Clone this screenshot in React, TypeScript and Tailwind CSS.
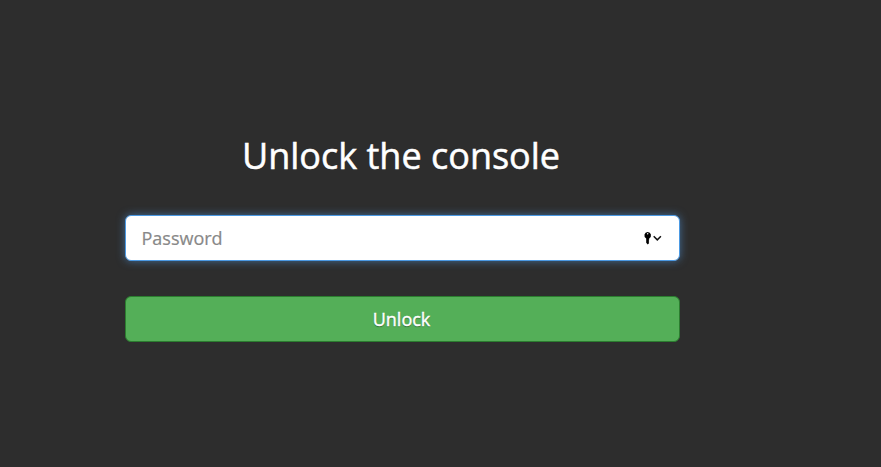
export default function App() {
  return (
    <main className="flex h-screen w-full flex-col overflow-hidden bg-[#2d2d2d] pl-[125px] pt-[131px] font-['Open_Sans','Noto_Sans',sans-serif]">
      <form className="flex w-[555px] flex-col" onSubmit={(e) => e.preventDefault()}>
        <h1 className="pr-[3px] text-center text-[36px] leading-[50px] text-white [-webkit-text-stroke:0.5px_white]">Unlock the console</h1>
        <div className="mt-[34px] flex h-[46px] items-center justify-between rounded-[6px] border border-[#4b99e3] bg-white pl-[15.5px] pr-[17px] shadow-[0_0_8px_rgba(82,150,220,0.6)]">
          <input type="password" placeholder="Password" aria-label="Password" className="min-w-0 flex-1 bg-transparent text-[18px] text-[#555] outline-none placeholder:text-[#888] placeholder:[-webkit-text-stroke:0.2px_#888]" />
          <svg width="19" height="14" viewBox="0 0 19 14" fill="none">
            <path fillRule="evenodd" d="M4.7 1a3.4 3.4 0 0 0-1.5 6.4v4.3l1.5 1.8L6.2 12l-.6-1 .6-1-.6-1 .6-.6v-1A3.4 3.4 0 0 0 4.7 1Zm0 1a.7.7 0 1 1 0 1.4.7.7 0 0 1 0-1.4Z" fill="#000" />
            <path d="m10.7 5.3 3.6 3.6 3.6-3.6" stroke="#111" strokeWidth="1.5" />
          </svg>
        </div>
        <button className="mt-[35px] h-[46px] rounded-[6px] border border-[#2b7d2f] bg-[#54af58] pr-[2px] text-[18px] text-white [-webkit-text-stroke:0.4px_white] [text-shadow:0_1px_1px_rgba(0,0,0,0.4)]">Unlock</button>
      </form>
    </main>
  );
}
